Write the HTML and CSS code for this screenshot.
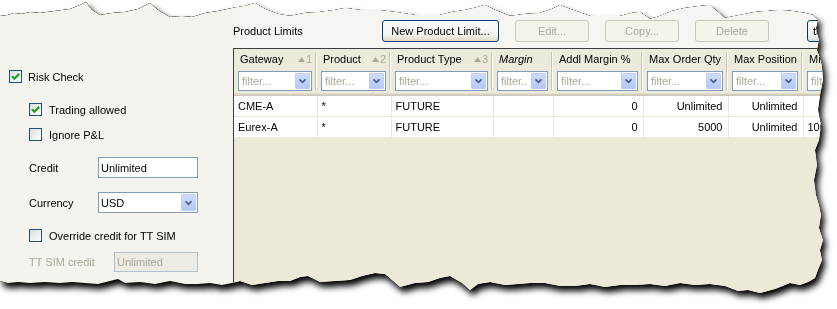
FILE: index.html
```html
<!DOCTYPE html>
<html lang="en">
<head>
    <meta charset="UTF-8">
    <meta name="viewport" content="width=device-width, initial-scale=1.0">
    <title>Product Limits</title>
    <link rel="stylesheet" href="styles.css">
</head>
<body>
    <div class="sheet">
        <div class="window">
            <aside class="side">
                <label class="check first">
                    <span class="box on"><svg viewBox="0 0 11 11"><path d="M2 5.3l2.4 2.4 4.8-4.8"/></svg></span>
                    Risk Check
                </label>
                <label class="check sub gap-lg">
                    <span class="box on"><svg viewBox="0 0 11 11"><path d="M2 5.3l2.4 2.4 4.8-4.8"/></svg></span>
                    Trading allowed
                </label>
                <label class="check sub gap-sm">
                    <span class="box"></span>
                    Ignore P&amp;L
                </label>

                <div class="field credit">
                    <span class="field-label">Credit</span>
                    <input class="text" type="text" value="Unlimited">
                </div>
                <div class="field currency">
                    <span class="field-label">Currency</span>
                    <div class="combo">
                        <span class="combo-value">USD</span>
                        <span class="drop"><svg viewBox="0 0 15 16"><path d="M4 6l3.5 3.5L11 6"/></svg></span>
                    </div>
                </div>

                <label class="check sub override">
                    <span class="box"></span>
                    Override credit for TT SIM
                </label>
                <div class="field sim disabled">
                    <span class="field-label">TT SIM credit</span>
                    <input class="text" type="text" value="Unlimited" disabled>
                </div>
            </aside>

            <section class="main">
                <div class="toolbar">
                    <span class="toolbar-title">Product Limits</span>
                    <button class="btn wide">New Product Limit...</button>
                    <button class="btn" disabled>Edit...</button>
                    <button class="btn" disabled>Copy...</button>
                    <button class="btn" disabled>Delete</button>
                    <button class="btn cut">ticks</button>
                </div>

                <div class="grid">
                    <table>
                        <colgroup>
                            <col style="width:83px"><col style="width:74px"><col style="width:102px"><col style="width:60px">
                            <col style="width:90px"><col style="width:85px"><col style="width:75px"><col style="width:80px">
                        </colgroup>
                        <thead>
                            <tr>
                                <th><div class="head"><div class="head-title"><span>Gateway</span><span class="sort"><svg viewBox="0 0 7 5"><path d="M0 5L3.5 0 7 5z"/></svg>1</span></div><div class="filter"><span>filter...</span><span class="drop"><svg viewBox="0 0 15 16"><path d="M4 6l3.5 3.5L11 6"/></svg></span></div></div></th>
                                <th><div class="head"><div class="head-title"><span>Product</span><span class="sort"><svg viewBox="0 0 7 5"><path d="M0 5L3.5 0 7 5z"/></svg>2</span></div><div class="filter"><span>filter...</span><span class="drop"><svg viewBox="0 0 15 16"><path d="M4 6l3.5 3.5L11 6"/></svg></span></div></div></th>
                                <th><div class="head"><div class="head-title"><span>Product Type</span><span class="sort"><svg viewBox="0 0 7 5"><path d="M0 5L3.5 0 7 5z"/></svg>3</span></div><div class="filter"><span>filter...</span><span class="drop"><svg viewBox="0 0 15 16"><path d="M4 6l3.5 3.5L11 6"/></svg></span></div></div></th>
                                <th><div class="head"><div class="head-title"><i>Margin</i></div><div class="filter"><span>filter..</span><span class="drop"><svg viewBox="0 0 15 16"><path d="M4 6l3.5 3.5L11 6"/></svg></span></div></div></th>
                                <th><div class="head"><div class="head-title"><span>Addl Margin %</span></div><div class="filter"><span>filter...</span><span class="drop"><svg viewBox="0 0 15 16"><path d="M4 6l3.5 3.5L11 6"/></svg></span></div></div></th>
                                <th><div class="head"><div class="head-title"><span>Max Order Qty</span></div><div class="filter"><span>filter...</span><span class="drop"><svg viewBox="0 0 15 16"><path d="M4 6l3.5 3.5L11 6"/></svg></span></div></div></th>
                                <th><div class="head"><div class="head-title"><span>Max Position</span></div><div class="filter"><span>filter...</span><span class="drop"><svg viewBox="0 0 15 16"><path d="M4 6l3.5 3.5L11 6"/></svg></span></div></div></th>
                                <th><div class="head"><div class="head-title"><span>Min Price</span></div><div class="filter"><span>filter...</span><span class="drop"><svg viewBox="0 0 15 16"><path d="M4 6l3.5 3.5L11 6"/></svg></span></div></div></th>
                            </tr>
                        </thead>
                        <tbody>
                            <tr>
                                <td>CME-A</td><td>*</td><td>FUTURE</td><td></td>
                                <td class="num">0</td><td class="num">Unlimited</td><td class="num">Unlimited</td><td></td>
                            </tr>
                            <tr>
                                <td>Eurex-A</td><td>*</td><td>FUTURE</td><td></td>
                                <td class="num">0</td><td class="num">5000</td><td class="num">Unlimited</td><td>1000</td>
                            </tr>
                        </tbody>
                    </table>
                </div>
            </section>
        </div>
    </div>
</body>
</html>
```

FILE: styles.css
```css
body {
    margin: 0;
    background: #fff;
    font-family: "Liberation Sans", Arial, sans-serif;
    font-size: 11px;
    color: #000;
}

/* torn paper look: shadow on the wrapper, jagged clip on the window */
.sheet {
    width: 837px;
    height: 309px;
    filter: drop-shadow(0 0 0.7px #000) drop-shadow(0 0 0.4px #000) drop-shadow(3px 5px 3px #000);
}

.window {
    width: 837px;
    height: 309px;
    display: flex;
    background: #f5f3ee;
    clip-path: polygon(
        0 16px, 8px 15px, 14px 13px, 22px 14px, 30px 12px, 40px 13px, 55px 11px, 70px 9px, 80px 5px, 86px 2px,
        92px 10px, 100px 15px, 112px 13px, 125px 12px, 138px 9px, 150px 3px, 158px 10px, 170px 17px, 182px 16px,
        192px 17px, 205px 13px, 218px 11px, 232px 8px, 245px 6px, 255px 3px, 265px 9px, 278px 14px, 290px 16px,
        305px 13px, 320px 12px, 335px 10px, 345px 8px, 360px 10px, 378px 10px, 395px 12px, 415px 15px, 428px 15px,
        440px 15px, 452px 12px, 465px 10px, 478px 7px, 485px 5px, 495px 10px, 510px 16px, 525px 14px, 540px 13px,
        552px 9px, 560px 5px, 570px 9px, 590px 16px, 605px 16px, 620px 16px, 632px 13px, 640px 12px, 650px 19px,
        660px 16px, 672px 11px, 685px 8px, 700px 6px, 710px 5px, 718px 12px, 725px 18px, 740px 15px, 755px 12px,
        768px 11px, 780px 10px, 792px 11px, 805px 13px, 813px 15px, 818px 20px,
        816px 28px, 819px 40px, 817px 50px, 820px 58px, 822px 66px, 823px 80px, 820px 95px, 818px 110px,
        821px 125px, 819px 140px, 815px 150px, 817px 165px, 814px 180px, 816px 195px, 819px 205px, 821px 215px,
        819px 228px, 823px 240px, 820px 250px, 822px 260px, 818px 270px, 815px 278px,
        808px 282px, 800px 285px, 790px 283px, 775px 289px, 760px 293px, 748px 290px, 738px 291px, 725px 286px,
        710px 284px, 695px 285px, 680px 283px, 665px 286px, 650px 284px, 635px 285px, 620px 285px, 605px 287px,
        590px 284px, 575px 286px, 560px 286px, 545px 283px, 530px 283px, 518px 284px, 505px 285px, 490px 282px,
        478px 284px, 470px 290px, 462px 283px, 450px 276px, 440px 278px, 428px 282px, 415px 283px, 400px 287px,
        392px 280px, 385px 274px, 375px 273px, 362px 276px, 350px 280px, 335px 281px, 320px 282px, 308px 276px,
        300px 277px, 290px 281px, 278px 281px, 265px 283px, 252px 285px, 240px 281px, 232px 283px, 222px 285px,
        210px 283px, 198px 284px, 185px 284px, 170px 281px, 155px 284px, 140px 282px, 125px 283px, 118px 279px,
        110px 281px, 98px 284px, 85px 283px, 72px 282px, 60px 283px, 45px 282px, 30px 283px, 18px 282px,
        8px 283px, 0 281px
    );
}

/* left settings panel */
.side {
    width: 233px;
    flex: none;
    display: flex;
    flex-direction: column;
    padding-top: 70px;
    box-sizing: border-box;
}

.check {
    display: flex;
    align-items: center;
    height: 13px;
    gap: 7px;
}

.check.first {
    margin-left: 9px;
    gap: 6px;
}

.check.sub {
    margin-left: 29px;
}

.gap-lg { margin-top: 20px; }
.gap-sm { margin-top: 12px; }
.override { margin-top: 16px; }

.box {
    width: 13px;
    height: 13px;
    flex: none;
    box-sizing: border-box;
    border: 1px solid #1c5180;
    background: linear-gradient(135deg, #dcdcd7, #fff);
    display: flex;
}

.box svg {
    width: 11px;
    height: 11px;
}

.box path {
    fill: none;
    stroke: #21a121;
    stroke-width: 2.2;
}

.field {
    display: flex;
    align-items: center;
    height: 21px;
    padding-left: 29px;
}

.field-label {
    width: 69px;
    flex: none;
}

.credit { margin-top: 16px; }
.currency { margin-top: 14px; }

.text {
    width: 100px;
    height: 21px;
    box-sizing: border-box;
    margin: 0;
    border: 1px solid #7f9db9;
    padding: 0 2px;
    font: inherit;
    color: #000;
    background: #fff;
    outline: none;
}

.combo {
    width: 100px;
    height: 21px;
    box-sizing: border-box;
    border: 1px solid #7f9db9;
    background: #fff;
    display: flex;
    align-items: center;
}

.combo-value {
    flex: 1;
    padding-left: 2px;
}

.sim {
    margin-top: 10px;
    height: 20px;
}

.sim .field-label {
    width: 85px;
}

.disabled {
    color: #aca899;
}

.disabled .text {
    width: 84px;
    height: 20px;
    border-color: #b4bfcc;
    background: #ecebe4;
    color: #aca899;
}

/* drop-down arrow buttons */
.drop {
    width: 15px;
    height: 17px;
    margin: 1px;
    flex: none;
    box-sizing: border-box;
    border: 1px solid #bccdf6;
    border-radius: 1px;
    background: linear-gradient(#cfdcfd, #b4c8f6);
    display: flex;
    align-items: center;
    justify-content: center;
}

.drop svg {
    width: 13px;
    height: 14px;
}

.drop path {
    fill: none;
    stroke: #4d6185;
    stroke-width: 2;
}

/* right side */
.main {
    flex: 1;
    min-width: 0;
    display: flex;
    flex-direction: column;
    background: #f6f5f1;
}

.toolbar {
    height: 48px;
    flex: none;
    display: flex;
    align-items: flex-start;
    padding-top: 20px;
    box-sizing: border-box;
    white-space: nowrap;
}

.toolbar-title {
    width: 149px;
    flex: none;
    line-height: 22px;
}

.btn {
    width: 74px;
    height: 22px;
    flex: none;
    margin: 0 16px 0 0;
    padding: 0;
    border: 1px solid #003c74;
    border-radius: 3px;
    background: linear-gradient(#fff, #f3f2ec 70%, #dcd8cc);
    font: inherit;
    color: #000;
}

.btn.wide {
    width: 117px;
}

.btn:disabled {
    border-color: #c9c7ba;
    background: #f5f4ea;
    color: #aca899;
}

.btn.cut {
    margin-left: 22px;
    width: 60px;
    text-align: left;
    padding-left: 5px;
}

.grid {
    flex: 1;
    border-top: 1px solid #3c3c3c;
    border-left: 1px solid #3c3c3c;
    background: #ece9d8;
    overflow: hidden;
}

.grid table {
    border-collapse: collapse;
    table-layout: fixed;
    width: 649px;
}

.grid th {
    padding: 0;
    font-weight: normal;
    text-align: left;
    vertical-align: top;
}

.head {
    height: 47px;
    box-sizing: border-box;
    padding: 2px 5px 0 4px;
    background-color: #ebeadb;
    background-image: linear-gradient(to left, #fff 1px, #c7c5b2 1px, #c7c5b2 2px, transparent 2px);
    background-size: 100% 38px;
    background-position: 0 3px;
    background-repeat: no-repeat;
    box-shadow: inset 0 -1px #cbc7b8, inset 0 -2px #d6d2c2, inset 0 -3px #e2decd;
    white-space: nowrap;
    overflow: hidden;
}

.head-title {
    display: flex;
    justify-content: space-between;
    line-height: 16px;
    padding-left: 2px;
}

.sort {
    color: #aca899;
    display: flex;
    align-items: center;
    gap: 1px;
}

.sort svg {
    width: 7px;
    height: 5px;
    fill: #aca899;
}

.filter {
    margin-top: 4px;
    height: 20px;
    box-sizing: border-box;
    border: 1px solid #7f9db9;
    background: #fff;
    display: flex;
}

.filter span:first-child {
    flex: 1;
    min-width: 0;
    overflow: hidden;
    padding-left: 3px;
    line-height: 18px;
    color: #aca899;
}

.filter .drop {
    height: 16px;
}

.grid td {
    height: 20px;
    padding: 0 4px;
    border-right: 1px solid #ece9da;
    border-bottom: 1px solid #ece9da;
    background: #fff;
    white-space: nowrap;
    overflow: hidden;
}

.grid td.num {
    text-align: right;
    padding-right: 5px;
}
```
